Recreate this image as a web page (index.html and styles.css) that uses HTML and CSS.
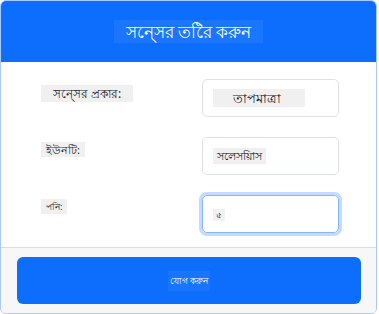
FILE: index.html
```html
<!DOCTYPE html>
<html>
<head>
    <meta charset="utf-8">
    <link rel="stylesheet" href="styles.css">
</head>
<body>
<div class="sensor-card">
    <div class="sensor-card__header">
        <span class="sensor-card__title">সনে্সর তরৈি করুন</span>
    </div>

    <div class="sensor-card__body">
        <div class="form-row">
            <div class="form-label"><span class="form-label__text form-label__text--big">সনে্সর প্রকার:</span></div>
            <div class="form-input">
                <span class="form-input__value form-input__value--type">তাপমাত্রা</span>
            </div>
        </div>
        <div class="form-row">
            <div class="form-label form-label--unit"><span class="form-label__text form-label__text--mid">ইউনটি:</span></div>
            <div class="form-input">
                <span class="form-input__value form-input__value--unit">সলেসয়িাস</span>
            </div>
        </div>
        <div class="form-row">
            <div class="form-label form-label--pin"><span class="form-label__text form-label__text--small">পনি:</span></div>
            <div class="form-input form-input--focus">
                <span class="form-input__value form-input__value--pin">৫</span>
            </div>
        </div>
    </div>

    <div class="sensor-card__footer">
        <div class="add-button"><span class="add-button__text">যােগ করুন</span></div>
    </div>
</div>
</body>
</html>
```

FILE: styles.css
```css
html, body {
    margin: 0;
    background-color: #ffffff;
    font-family: "Noto Sans", "DejaVu Sans", sans-serif;
}

.sensor-card {
    width: 375px;
    border: 1px solid #a9c9fb;
    border-radius: 6px;
    overflow: hidden;
}

.sensor-card__header {
    background-color: #0d6efd;
    height: 61px;
    display: flex;
    align-items: center;
    justify-content: center;
}

.sensor-card__title {
    color: #ffffff;
    font-size: 17px;
    line-height: 23px;
    background-color: rgba(255, 255, 255, 0.06);
    padding: 0 12px;
}

.sensor-card__body {
    padding: 17px 0 14px 40px;
    display: flex;
    flex-direction: column;
    gap: 20px;
}

.form-row {
    display: flex;
}

.form-label {
    width: 161px;
    padding-top: 6px;
    display: flex;
    align-items: flex-start;
}

.form-label--unit {
    padding-top: 5px;
}

.form-label--pin {
    padding-top: 4px;
}

.form-label__text {
    background-color: #f0f0f0;
    color: #222;
}

.form-label__text--big {
    font-size: 12px;
    line-height: 17px;
    padding: 0 12px;
}

.form-label__text--mid {
    font-size: 11px;
    line-height: 15px;
    padding: 0 5px;
}

.form-label__text--small {
    font-size: 9px;
    line-height: 15px;
    padding: 0 5px;
}

.form-input {
    height: 36px;
    border: 1px solid #dee2e6;
    border-radius: 5px;
    display: flex;
    align-items: center;
    padding-left: 10px;
    width: 125px;
}

.form-input--focus {
    border-color: #86b7fe;
    box-shadow: 0 0 0 3px rgba(13, 110, 253, 0.25);
}

.form-input__value {
    background-color: #f0f0f0;
    color: #111;
}

.form-input__value--type {
    font-size: 13px;
    line-height: 18px;
    padding: 0 24px 0 20px;
}

.form-input__value--unit {
    font-size: 11px;
    line-height: 16px;
    padding: 0 4px;
}

.form-input__value--pin {
    font-size: 9px;
    line-height: 12px;
    padding: 0 3px;
    margin-top: 2px;
}

.sensor-card__footer {
    background-color: #f7f7f7;
    border-top: 1px solid #dcdcdc;
    padding: 9px 15px 9px 16px;
}

.add-button {
    background-color: #0d6efd;
    border-radius: 6px;
    height: 47px;
    display: flex;
    align-items: center;
    justify-content: center;
}

.add-button__text {
    color: #ffffff;
    font-size: 9px;
    line-height: 20px;
    background-color: rgba(255, 255, 255, 0.05);
    padding: 0 2px;
}
```
